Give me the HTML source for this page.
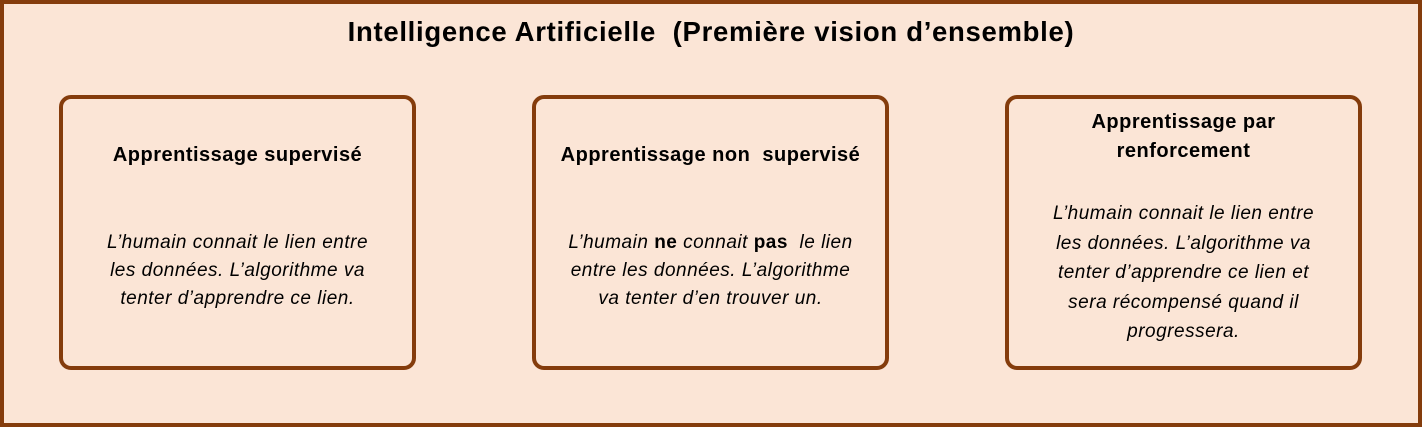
<!DOCTYPE html>
<html><head><meta charset="utf-8"><style>
body{margin:0;width:1422px;height:427px;overflow:hidden;background:#fff;font-family:"Liberation Sans",sans-serif;}
.outer{position:absolute;left:0;top:0;width:1414px;height:419px;border:4px solid #843c0c;background:#fbe5d6;}
.title{position:absolute;left:0;width:1422px;top:16px;text-align:center;font-weight:bold;font-size:27.5px;color:#000;letter-spacing:0.7px}
.box{position:absolute;top:95px;width:349px;height:267px;border:4px solid #843c0c;border-radius:12px;}
.t{position:absolute;left:-10px;width:369px;text-align:center;font-weight:bold;font-size:20px;line-height:29px;letter-spacing:0.5px}
.b{position:absolute;left:-10px;width:369px;text-align:center;font-style:italic;font-size:19px;line-height:28px;letter-spacing:0.5px}
</style></head><body>
<div class="outer"></div>
<div class="title">Intelligence Artificielle &nbsp;(Première vision d’ensemble)</div>
<div class="box" style="left:59px">
 <div class="t" style="top:42px">Apprentissage supervisé</div>
 <div class="b" style="top:130px">L’humain connait le lien entre<br>les données. L’algorithme va<br>tenter d’apprendre ce lien.</div>
</div>
<div class="box" style="left:532px">
 <div class="t" style="top:42px">Apprentissage non &nbsp;supervisé</div>
 <div class="b" style="top:130px">L’humain <b style="font-style:normal">ne</b> connait <b style="font-style:normal">pas</b> &nbsp;le lien<br>entre les données. L’algorithme<br>va tenter d’en trouver un.</div>
</div>
<div class="box" style="left:1005px">
 <div class="t" style="top:9px">Apprentissage par<br>renforcement</div>
 <div class="b" style="top:100px;line-height:29.5px">L’humain connait le lien entre<br>les données. L’algorithme va<br>tenter d’apprendre ce lien et<br>sera récompensé quand il<br>progressera.</div>
</div>
</body></html>
